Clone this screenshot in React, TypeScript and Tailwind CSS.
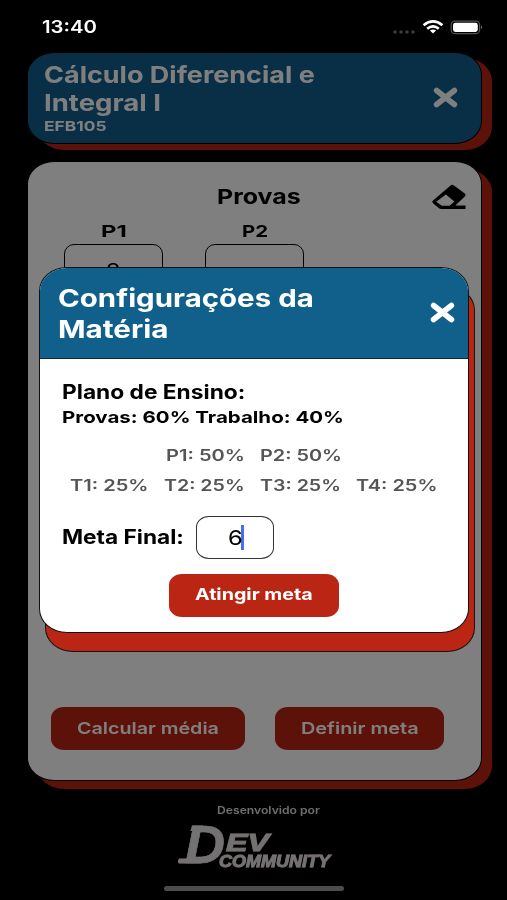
import { useLayoutEffect, useRef, useState } from "react";

/* Single line of text stretched horizontally to fill the width of its box. */
function Fit({ children, className = "" }: { children: string; className?: string }) {
  const ref = useRef<HTMLSpanElement>(null);
  const [scale, setScale] = useState(1);
  useLayoutEffect(() => {
    const el = ref.current;
    if (el && el.parentElement) setScale(el.parentElement.clientWidth / el.offsetWidth);
  }, []);
  return (
    <div className={`flex shrink-0 ${className}`}>
      <span ref={ref} className="shrink-0 origin-left whitespace-nowrap" style={{ transform: `scaleX(${scale})` }}>
        {children}
      </span>
    </div>
  );
}

function Close({ className = "" }: { className?: string }) {
  return (
    <svg viewBox="0 0 25 21" className={`h-[21px] w-[25px] shrink-0 ${className}`} fill="none" stroke="currentColor" strokeWidth="5.6" strokeLinecap="round">
      <path d="M3.600 3.500 21.400 17.500M21.400 3.500 3.600 17.500" />
    </svg>
  );
}

function Eraser() {
  return (
    <svg viewBox="0 0 34 26" className="h-[26px] w-[34px] shrink-0" fill="currentColor" fillRule="evenodd">
      <path d="M18.600 1.500Q20.200 0 21.900 1.400L32.800 9.600Q34.300 11 32.800 12.500L23.300 21.600H33.500V25H9.300Q8 25 7 24.200L1 19.200Q-.4 17.800 1 16.400ZM4.200 17.800L9.700 21.800H17.700L22.400 17.400L13.900 10.400Z" />
    </svg>
  );
}

function StatusBar() {
  return (
    <div className="relative z-20 flex h-[52px] items-start justify-between pr-[23px] pl-[42px] text-white">
      <Fit className="mt-[17px] w-[55px] text-[17px] leading-[21px] font-semibold">13:40</Fit>
      <svg className="mt-[18px] h-[18px] w-[92px]" viewBox="392 18 92 18">
        <g fill="#3c3c3c">
          <circle cx="395" cy="32" r="1.8" />
          <circle cx="401" cy="32" r="1.8" />
          <circle cx="407" cy="32" r="1.8" />
          <circle cx="413" cy="32" r="1.8" />
        </g>
        <g fill="none" stroke="#fff" strokeWidth="2.7">
          <path d="M423.600 25.200Q433 17.600 442.400 25.200" />
          <path d="M427.200 28.800Q433 24 438.800 28.800" />
        </g>
        <path d="M429.900 30.600Q433 28.400 436.100 30.600L433 33.600Z" fill="#fff" />
        <rect x="451.200" y="21.100" width="28.400" height="12.600" rx="3.800" fill="none" stroke="#555" strokeWidth="1.200" />
        <rect x="453" y="22.800" width="24.800" height="9.200" rx="2.400" fill="#fff" />
        <path d="M481 25.500Q483.500 27.300 481 29.200Z" fill="#666" />
      </svg>
    </div>
  );
}

function Logo() {
  return (
    <svg className="h-[68px] w-[164px] drop-shadow-[0.7px_0_0_#8a2b2b]" viewBox="173 810 164 68">
      <g fontFamily="Liberation Sans, sans-serif" fontWeight="700" fontStyle="italic" fill="#e5e5e5" stroke="#e5e5e5">
        <text x="185" y="863" fontSize="53" textLength="40" lengthAdjust="spacingAndGlyphs" strokeWidth=".6">D</text>
        <path d="M192 825.500H203L201.500 831H190.500ZM179 858.500H203L201 863.600H179Q176.800 862 179 858.500Z" stroke="none" />
        <text x="226" y="850.500" fontSize="24" textLength="43" lengthAdjust="spacingAndGlyphs" strokeWidth="1">EV</text>
        <text x="219" y="867" fontSize="16" textLength="111" lengthAdjust="spacingAndGlyphs" strokeWidth=".9">COMMUNITY</text>
      </g>
    </svg>
  );
}

function Grade({ label, value }: { label: string; value: string }) {
  return (
    <div className="flex w-[99px] flex-col items-center">
      <Fit className="w-[26px] text-[16.5px] leading-5 font-bold">{label}</Fit>
      <div className="mt-[3px] flex h-[44px] w-full items-center justify-center rounded-[10px] border-[1.5px] border-black pt-[9px] text-[20px]">
        <span className="scale-x-120">{value}</span>
      </div>
    </div>
  );
}

function Modal() {
  return (
    <div className="absolute top-[267px] left-[39px] z-10 flex h-[366px] w-[430px] flex-col overflow-hidden rounded-[28px/24px] border border-[#111] bg-white shadow-[6px_19px_0_-1px_#bb2513,6px_19px_0_0_#151515]">
      <div className="flex h-[91px] shrink-0 items-center justify-between border-b-[1.5px] border-[#0b2b3c] bg-[#115f8b] pr-[13px] pl-[18px] text-white">
        <div className="pt-px text-[24.5px] leading-[30.5px] font-bold">
          <Fit className="w-[256px]">Configurações da</Fit>
          <Fit className="w-[110px]">Matéria</Fit>
        </div>
        <Close className="mb-px" />
      </div>
      <div className="flex flex-col pl-[22px] text-black">
        <Fit className="mt-[21px] w-[183px] text-[19.5px] leading-6 font-bold">Plano de Ensino:</Fit>
        <Fit className="mt-[3px] w-[282px] text-[16.5px] leading-5 font-bold">Provas: 60% Trabalho: 40%</Fit>
        <div className="mt-[19px] flex gap-[15px] pl-[104px] text-[15.5px] leading-5 font-semibold text-[#555]">
          <Fit className="w-[79px]">P1: 50%</Fit>
          <Fit className="w-[82px]">P2: 50%</Fit>
        </div>
        <div className="mt-[10px] flex gap-[15px] pl-[8px] text-[15.5px] leading-5 font-semibold text-[#555]">
          <Fit className="w-[79px]">T1: 25%</Fit>
          <Fit className="w-[81px]">T2: 25%</Fit>
          <Fit className="w-[81px]">T3: 25%</Fit>
          <Fit className="w-[81px]">T4: 25%</Fit>
        </div>
        <div className="mt-[20px] flex items-center">
          <Fit className="-mt-[2px] w-[122px] text-[19.5px] leading-6 font-bold">Meta Final:</Fit>
          <div className="ml-[12px] flex h-[43px] w-[78px] items-center rounded-[13px/11px] border border-[#333] pl-[31px] text-[20.5px] leading-6">
            <Fit className="w-[15px]">6</Fit>
            <div className="-ml-[2px] h-[25px] w-[2.5px] shrink-0 bg-[#4470ee]" />
          </div>
        </div>
      </div>
      <div className="mt-[15px] ml-[129px] flex h-[43px] w-[170px] shrink-0 items-center justify-center rounded-[13px/11px] bg-[#bb2513] text-[16.5px] leading-5 font-bold text-white">
        <Fit className="-mt-[3px] w-[118px]">Atingir meta</Fit>
      </div>
    </div>
  );
}

export default function App() {
  return (
    <div className="relative h-[900px] w-[507px] overflow-hidden bg-black font-['Inter','Liberation_Sans',sans-serif]">
      <StatusBar />
      <div className="ml-[27px] flex h-[92px] w-[455px] items-center justify-between rounded-[27px/23px] border border-black bg-[#115f8b] pr-[23px] pl-[16px] text-white shadow-[10px_6px_0_0_#bb2513]">
        <div className="flex flex-col text-[23.5px] leading-7 font-bold">
          <Fit className="w-[271px]">Cálculo Diferencial e</Fit>
          <Fit className="w-[117px]">Integral I</Fit>
          <Fit className="w-[63px] text-[13.5px] leading-[18px]">EFB105</Fit>
        </div>
        <Close className="mb-px" />
      </div>
      <div className="mt-[17px] ml-[27px] flex h-[620px] w-[455px] flex-col rounded-[27px/23px] border border-black bg-white text-black shadow-[10px_8px_0_0_#bb2513]">
        <div className="mt-[18px] flex h-[34px] items-center justify-end pr-[15px]">
          <Fit className="mr-[131px] w-[84px] text-[20.5px] leading-6 font-bold">Provas</Fit>
          <Eraser />
        </div>
        <div className="mt-[7px] flex gap-[42px] pl-[36px]">
          <Grade label="P1" value="8" />
          <Grade label="P2" value="" />
        </div>
        <div className="mt-auto mb-[30px] flex gap-[30px] pl-[23px] text-[16.5px] leading-5 font-semibold text-white">
          <div className="flex h-[43px] w-[194px] items-center justify-center rounded-[13px/11px] bg-[#bb2513]">
            <Fit className="-mt-px w-[142px]">Calcular média</Fit>
          </div>
          <div className="flex h-[43px] w-[169px] items-center justify-center rounded-[13px/11px] bg-[#bb2513]">
            <Fit className="-mt-px w-[118px]">Definir meta</Fit>
          </div>
        </div>
      </div>
      <div className="mt-[22px] flex flex-col items-center text-[#ddd]">
        <Fit className="ml-[29px] w-[103px] text-[10.5px] leading-4 font-semibold">Desenvolvido por</Fit>
        <div className="-mt-[9px] ml-[2px] h-[68px]">
          <Logo />
        </div>
        <div className="mt-[8px] h-[5px] w-[180px] rounded-full bg-[#999]" />
      </div>
      <div className="absolute inset-0 bg-black/50" />
      <Modal />
    </div>
  );
}
